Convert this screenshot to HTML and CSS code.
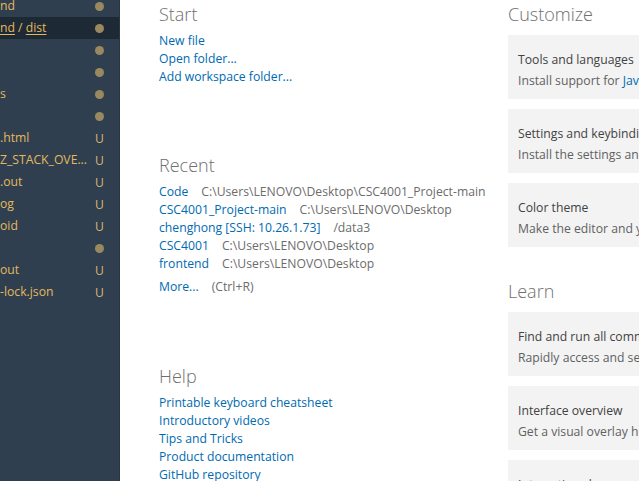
FILE: index.html
```html
<!DOCTYPE html>
<html>
<head>
<meta charset="utf-8">
<link rel="stylesheet" href="styles.css">
</head>
<body>
<div class="app">
  <aside class="sidebar">
    <ul class="tree">
      <li class="row"><span class="name">nd</span><span class="dot"></span></li>
      <li class="row selected"><span class="name"><u>nd</u> / <u>dist</u></span><span class="dot"></span></li>
      <li class="row"><span class="name"></span><span class="dot"></span></li>
      <li class="row"><span class="name"></span><span class="dot"></span></li>
      <li class="row"><span class="name">s</span><span class="dot"></span></li>
      <li class="row"><span class="name"></span><span class="dot"></span></li>
      <li class="row"><span class="name">.html</span><span class="badge">U</span></li>
      <li class="row"><span class="name">Z_STACK_OVE...</span><span class="badge">U</span></li>
      <li class="row"><span class="name">.out</span><span class="badge">U</span></li>
      <li class="row"><span class="name">og</span><span class="badge">U</span></li>
      <li class="row"><span class="name">oid</span><span class="badge">U</span></li>
      <li class="row"><span class="name"></span><span class="dot"></span></li>
      <li class="row"><span class="name">out</span><span class="badge">U</span></li>
      <li class="row"><span class="name">-lock.json</span><span class="badge">U</span></li>
    </ul>
  </aside>
  <main class="welcome">
    <section class="col col-left">
      <div class="group">
        <h2 class="heading">Start</h2>
        <ul class="links">
          <li><a class="link">New file</a></li>
          <li><a class="link">Open folder...</a></li>
          <li><a class="link">Add workspace folder...</a></li>
        </ul>
      </div>
      <div class="group recent">
        <h2 class="heading">Recent</h2>
        <ul class="links">
          <li><a class="link">Code</a><span class="path">C:\Users\LENOVO\Desktop\CSC4001_Project-main</span></li>
          <li><a class="link">CSC4001_Project-main</a><span class="path">C:\Users\LENOVO\Desktop</span></li>
          <li><a class="link">chenghong [SSH: 10.26.1.73]</a><span class="path">/data3</span></li>
          <li><a class="link">CSC4001</a><span class="path">C:\Users\LENOVO\Desktop</span></li>
          <li><a class="link">frontend</a><span class="path">C:\Users\LENOVO\Desktop</span></li>
          <li class="more"><a class="link">More...</a><span class="path">(Ctrl+R)</span></li>
        </ul>
      </div>
      <div class="group help">
        <h2 class="heading">Help</h2>
        <ul class="links">
          <li><a class="link">Printable keyboard cheatsheet</a></li>
          <li><a class="link">Introductory videos</a></li>
          <li><a class="link">Tips and Tricks</a></li>
          <li><a class="link">Product documentation</a></li>
          <li><a class="link">GitHub repository</a></li>
        </ul>
      </div>
    </section>
    <section class="col col-right">
      <div class="group">
        <h2 class="heading">Customize</h2>
        <div class="cards">
          <div class="card"><div class="card-title">Tools and languages</div><div class="card-desc">Install support for <a class="link">JavaScript</a>, Python, Java, PHP</div></div>
          <div class="card"><div class="card-title">Settings and keybindings</div><div class="card-desc">Install the settings and keyboard shortcuts of Vim</div></div>
          <div class="card"><div class="card-title">Color theme</div><div class="card-desc">Make the editor and your code look the way you love</div></div>
        </div>
      </div>
      <div class="group learn">
        <h2 class="heading">Learn</h2>
        <div class="cards">
          <div class="card"><div class="card-title">Find and run all commands</div><div class="card-desc">Rapidly access and search commands from the Command Palette</div></div>
          <div class="card"><div class="card-title">Interface overview</div><div class="card-desc">Get a visual overlay highlighting the major components of the UI</div></div>
          <div class="card"><div class="card-title">Interactive playground</div><div class="card-desc">Try out essential editor features in a short walkthrough</div></div>
        </div>
      </div>
    </section>
  </main>
</div>
</body>
</html>
```

FILE: styles.css
```css
* { box-sizing: border-box; }
html, body { margin: 0; padding: 0; }
body {
  width: 639px;
  height: 481px;
  overflow: hidden;
  font-family: "Open Sans", "Noto Sans", sans-serif;
  font-size: 12.2px;
  background: #ffffff;
}
ul { list-style: none; margin: 0; padding: 0; }
.app { display: flex; height: 481px; }

.sidebar {
  width: 120px;
  flex: none;
  background: #2f3f4f;
  border-right: 1px solid #28363f;
  overflow: hidden;
}
.tree { margin-top: -5px; }
.row {
  height: 22px;
  display: flex;
  align-items: center;
  justify-content: space-between;
  padding-right: 15px;
  color: #e4b95e;
  white-space: nowrap;
}
.row.selected { background: #1d2935; }
.name { line-height: 22px; }
.name u { text-decoration-thickness: 1px; text-underline-offset: 2px; }
.dot {
  width: 9px; height: 9px;
  border-radius: 50%;
  background: #9a8960;
}
.badge { color: #d7b570; width: 9px; text-align: center; }

.welcome {
  flex: 1;
  display: flex;
  padding-left: 39px;
  overflow: hidden;
}
.col-left { width: 349px; flex: none; }
.col-right { flex: 1; min-width: 0; }

.heading {
  margin: 0;
  font-weight: 300;
  font-size: 18px;
  line-height: 24px;
  color: #6f6f6f;
  padding-top: 2px;
}
.links { margin-top: 6px; }
.links li { line-height: 18px; white-space: nowrap; }
.link { color: #006ab1; cursor: pointer; }
.path { color: #6c6c6c; margin-left: 13px; }
.recent { margin-top: 65px; }
.more { margin-top: 5px; }
.help { margin-top: 66px; }

.cards { display: flex; flex-direction: column; gap: 10px; margin-top: 9px; }
.card {
  background: #f3f3f3;
  height: 64px;
  padding: 14px 10px 8px;
  white-space: nowrap;
  overflow: hidden;
}
.card-title { line-height: 21px; color: #424242; }
.card-desc { line-height: 21px; color: #616161; }
.learn { margin-top: 30px; }
```
